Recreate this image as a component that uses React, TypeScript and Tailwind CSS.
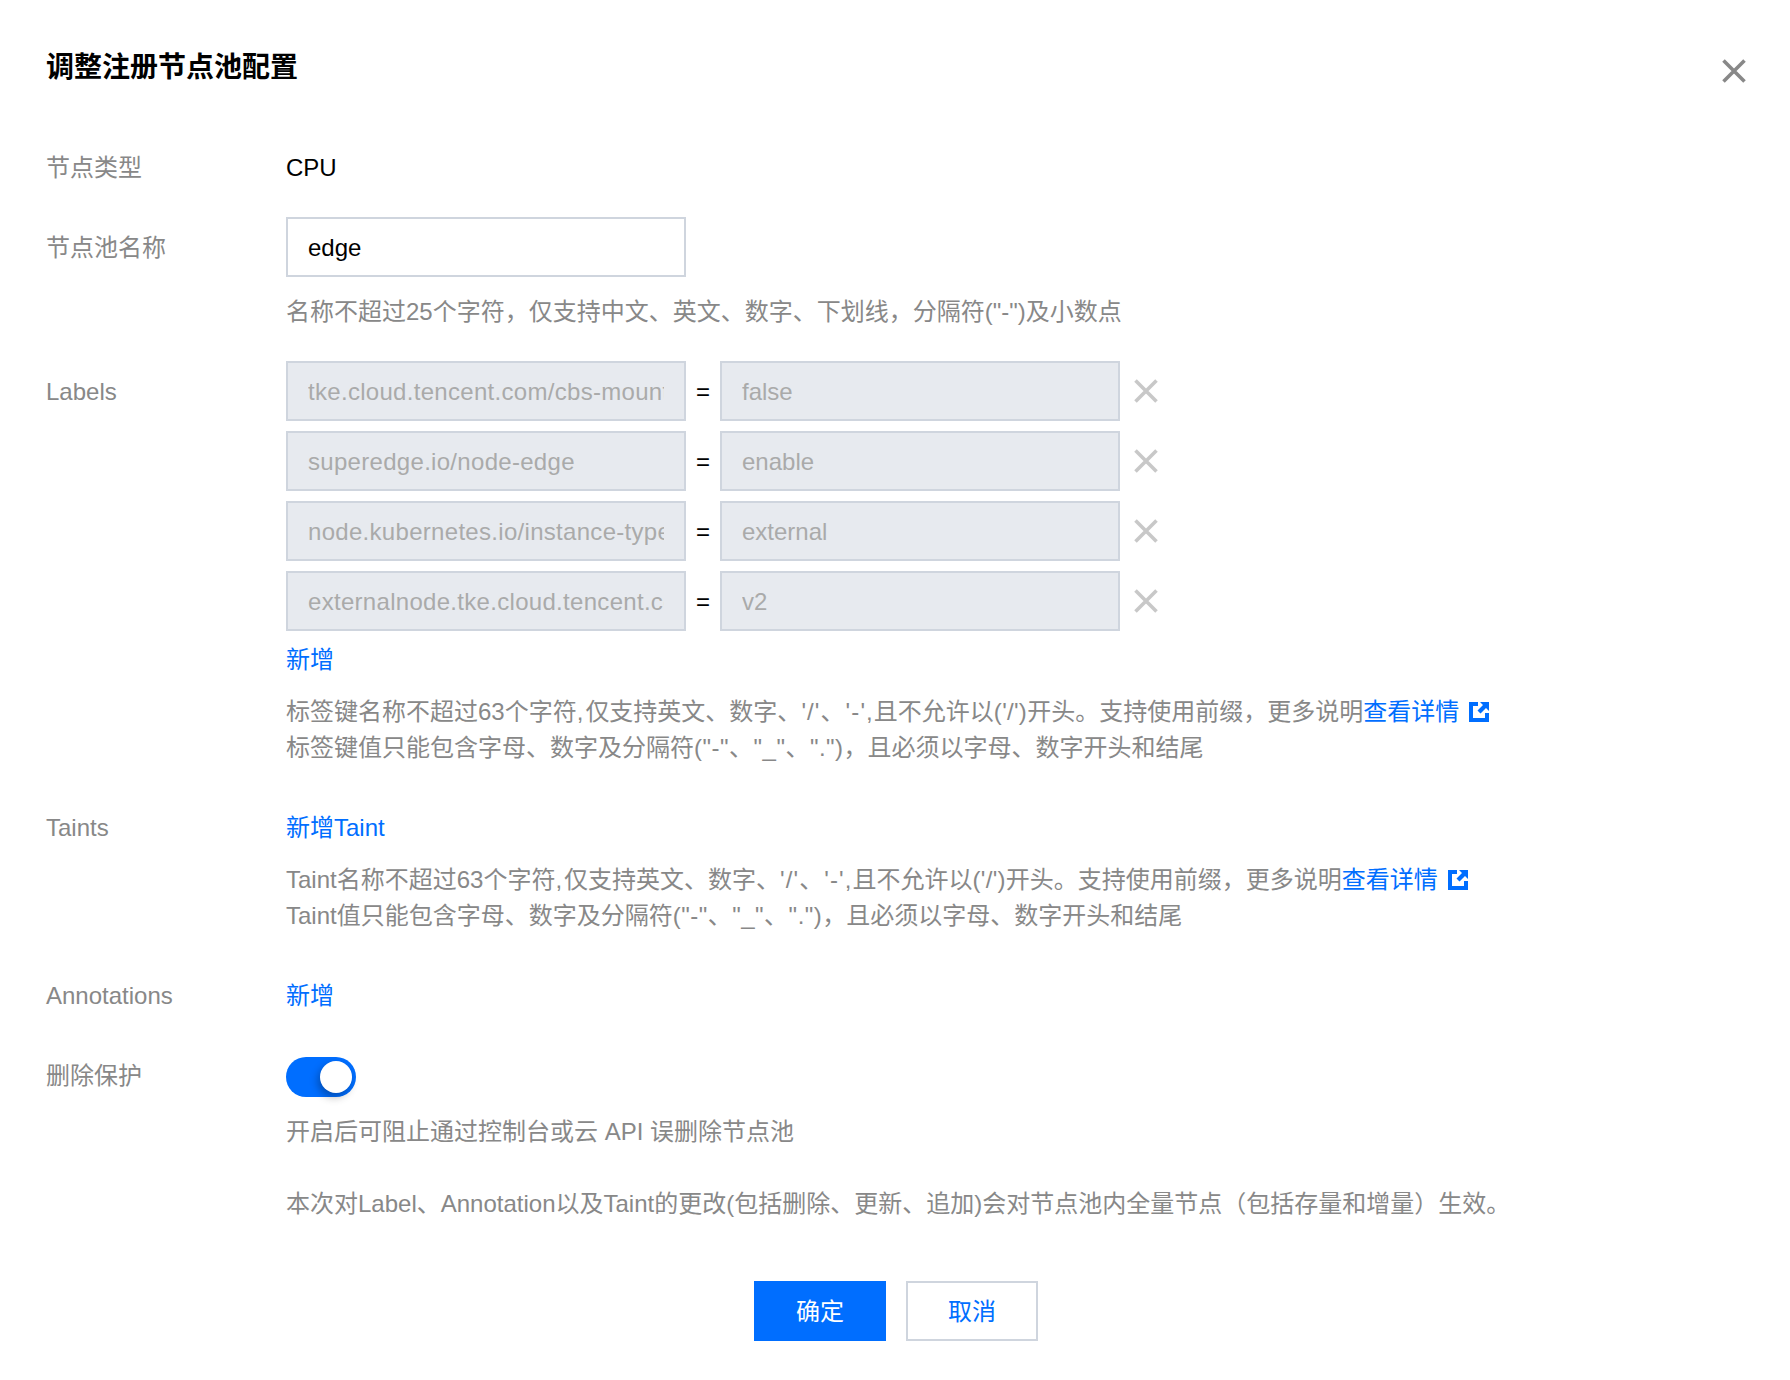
const labels = [
  ["tke.cloud.tencent.com/cbs-mount", "false"],
  ["superedge.io/node-edge", "enable"],
  ["node.kubernetes.io/instance-type", "external"],
  ["externalnode.tke.cloud.tencent.com/type", "v2"],
];

function ExternalIcon() {
  return (
    <svg viewBox="0 0 20 20" className="ml-[10px] inline-block h-5 w-5 align-[-2px]">
      <path fill="#006eff" d="M0 0h9v4H4v12h12v-5h4v9H0z" />
      <path fill="#006eff" d="M11 0h9v9l-3-3-5.5 5.5-3-3L14 3z" />
    </svg>
  );
}

function CloseIcon({ color, className }: { color: string; className: string }) {
  return (
    <svg viewBox="0 0 24 24" className={className}>
      <path d="M1.5 1.5l21 21M22.5 1.5l-21 21" stroke={color} strokeWidth="3.6" />
    </svg>
  );
}

function Row({ label, className, children }: { label: string; className?: string; children: React.ReactNode }) {
  return (
    <div className={`flex ${className ?? ""}`}>
      <div className="w-[240px] shrink-0 text-[#888888]">{label}</div>
      <div className="min-w-0 flex-1">{children}</div>
    </div>
  );
}

export default function App() {
  return (
    <div
      className="relative h-[1380px] w-[1790px] overflow-hidden bg-white px-[46px] text-[24px] leading-[36px] text-black"
      style={{ fontFamily: '"Liberation Sans", "Noto Sans CJK SC", sans-serif' }}
    >
      <h1 className="pt-[50px] text-[28px] leading-[36px] font-bold">调整注册节点池配置</h1>
      <button className="absolute top-[59px] left-[1722px]">
        <CloseIcon color="#888888" className="h-6 w-6" />
      </button>

      <Row label="节点类型" className="mt-[64px]">
        <div>CPU</div>
      </Row>

      <Row label="节点池名称" className="mt-[44px]">
        <input
          readOnly
          value="edge"
          className="mt-[-13px] block h-[60px] w-[400px] border-2 border-[#cfd5de] bg-white px-[20px] pt-[2px] outline-none"
        />
        <p className="mt-[17px] text-[#888888]">名称不超过25个字符，仅支持中文、英文、数字、下划线，分隔符("-")及小数点</p>
      </Row>

      <Row label="Labels" className="mt-[44px]">
        <div className="mt-[-13px] flex flex-col gap-[10px]">
          {labels.map(([k, v]) => (
            <div key={k} className="flex items-center">
              <input
                disabled
                value={k}
                className="block h-[60px] w-[400px] border-2 border-[#cfd5de] bg-[#e7eaef] px-[20px] pt-[2px] tracking-[0.3px] text-[#aaaaaa]"
              />
              <span className="w-[34px] pt-[2px] text-center text-black">=</span>
              <input
                disabled
                value={v}
                className="block h-[60px] w-[400px] border-2 border-[#cfd5de] bg-[#e7eaef] px-[20px] pt-[2px] text-[#aaaaaa]"
              />
              <CloseIcon color="#c8c8c8" className="ml-[14px] h-6 w-6" />
            </div>
          ))}
        </div>
        <a className="mt-[11px] block text-[#006eff]">新增</a>
        <p className="mt-[16px] whitespace-nowrap text-[#888888]">
          标签键名称不超过63个字符<span className="tracking-[2px]">,</span>仅支持英文、数字、
          <span className="tracking-[1.1px]">'/'、'-',</span>且不允许以<span className="tracking-[0.3px]">('/')</span>
          开头。支持使用前缀，更多说明
          <a className="text-[#006eff]">查看详情</a>
          <ExternalIcon />
          <br />
          标签键值只能包含字母、数字及分隔符<span className="tracking-[0.5px]">("-"、"_"、".")</span>
          ，且必须以字母、数字开头和结尾
        </p>
      </Row>

      <Row label="Taints" className="mt-[44px]">
        <a className="block text-[#006eff]">新增Taint</a>
        <p className="mt-[16px] whitespace-nowrap text-[#888888]">
          Taint名称不超过63个字符<span className="tracking-[2px]">,</span>仅支持英文、数字、
          <span className="tracking-[1.1px]">'/'、'-',</span>且不允许以<span className="tracking-[0.3px]">('/')</span>
          开头。支持使用前缀，更多说明
          <a className="text-[#006eff]">查看详情</a>
          <ExternalIcon />
          <br />
          Taint值只能包含字母、数字及分隔符<span className="tracking-[0.5px]">("-"、"_"、".")</span>
          ，且必须以字母、数字开头和结尾
        </p>
      </Row>

      <Row label="Annotations" className="mt-[44px]">
        <a className="block text-[#006eff]">新增</a>
      </Row>

      <Row label="删除保护" className="mt-[44px]">
        <div className="relative mt-[-1px] h-[40px] w-[70px] rounded-full bg-[#006eff]">
          <span className="absolute top-[4px] right-[4px] h-[32px] w-[32px] rounded-full bg-white shadow-[-2px_4px_8px_rgba(0,0,0,0.3)]" />
        </div>
        <p className="mt-[17px] text-[#888888]">开启后可阻止通过控制台或云 API 误删除节点池</p>
        <p className="mt-[36px] whitespace-nowrap text-[#888888]">
          本次对Label、Annotation以及Taint的更改(包括删除、更新、追加)会对节点池内全量节点（包括存量和增量）生效。
        </p>
      </Row>

      <div className="mt-[59px] flex justify-center gap-[20px] pl-[2px]">
        <button className="h-[60px] w-[132px] bg-[#006eff] pt-[2px] text-white">确定</button>
        <button className="h-[60px] w-[132px] border-2 border-[#cfd5de] bg-white pt-[2px] text-[#006eff]">取消</button>
      </div>
    </div>
  );
}
